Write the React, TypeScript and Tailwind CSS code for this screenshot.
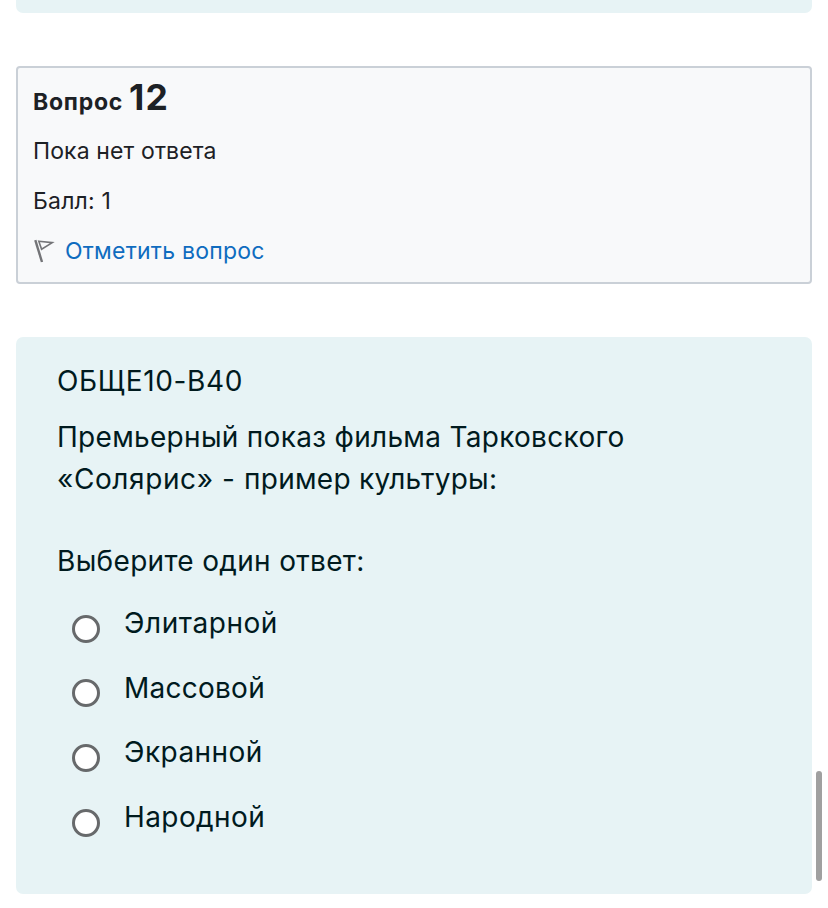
const answers = [
  { label: "Элитарной", tracking: "tracking-[0.56px]" },
  { label: "Массовой", tracking: "tracking-[0.25px]" },
  { label: "Экранной", tracking: "tracking-[0.45px]" },
  { label: "Народной", tracking: "tracking-[0.4px]" },
];

export default function App() {
  return (
    <main className="relative h-[908px] w-[828px] overflow-hidden bg-white px-4 font-['Inter','Liberation_Sans',sans-serif]">
      <div className="h-[13px] rounded-b-[7px] bg-[#e7f3f5]" />

      <section className="mt-[53px] h-[218px] rounded-[4px] border-2 border-[#cad0d7] bg-[#f8f9fa] px-[15px] pt-[5px] text-[23px] text-[#1d2125]">
        <h3 className="flex h-[50px] items-baseline gap-[6px] font-bold">
          <span className="text-[23px] leading-[50px] tracking-[0.75px]">Вопрос</span>
          <span className="text-[35.5px] leading-[50px] tracking-[1.2px]">12</span>
        </h3>
        <p className="h-[50px] leading-[56px] tracking-[0.12px]">Пока нет ответа</p>
        <p className="h-[50px] leading-[56px] tracking-[0.2px]">Балл: 1</p>
        <a className="flex h-[50px] items-start gap-[10px] leading-[56px] tracking-[0.23px] text-[#0f6cbf]">
          <svg className="mt-[15px]" width="22" height="26" viewBox="0 0 22 26" fill="none" stroke="#737477">
            <path d="M2.3 2.2 L9 24" strokeWidth="2.4" />
            <path d="M5.8 3.2 L19.3 4.6 L8.6 11.3 Z" strokeWidth="1.6" />
          </svg>
          <span>Отметить вопрос</span>
        </a>
      </section>

      <section className="mt-[53px] h-[557px] rounded-[7px] bg-[#e7f3f5] px-[41px] pt-[23px] text-[28px] leading-[42px] text-[#001a1e]">
        <p className="tracking-[0.65px]">ОБЩЕ10-В40</p>
        <p className="mt-[14px]">
          <span className="tracking-[0.3px]">Премьерный показ фильма Тарковского</span>
          <br />
          <span className="tracking-[0.6px]">«Солярис» - </span>
          <span className="tracking-[0.27px]">пример культуры:</span>
        </p>
        <p className="mt-[40px] tracking-[0.32px]">Выберите один ответ:</p>
        <div className="mt-[20px] pl-[15px]">
          {answers.map((a) => (
            <label key={a.label} className="flex h-[64.6px] items-start">
              <span className="mt-[12.8px] size-7 shrink-0 rounded-full border-[3px] border-[#67696b] bg-white" />
              <span className={`ml-6 ${a.tracking}`}>{a.label}</span>
            </label>
          ))}
        </div>
      </section>
      <div className="absolute left-[816px] top-[771px] h-[110px] w-[6px] rounded-full bg-[#a0a0a0]" />
    </main>
  );
}
